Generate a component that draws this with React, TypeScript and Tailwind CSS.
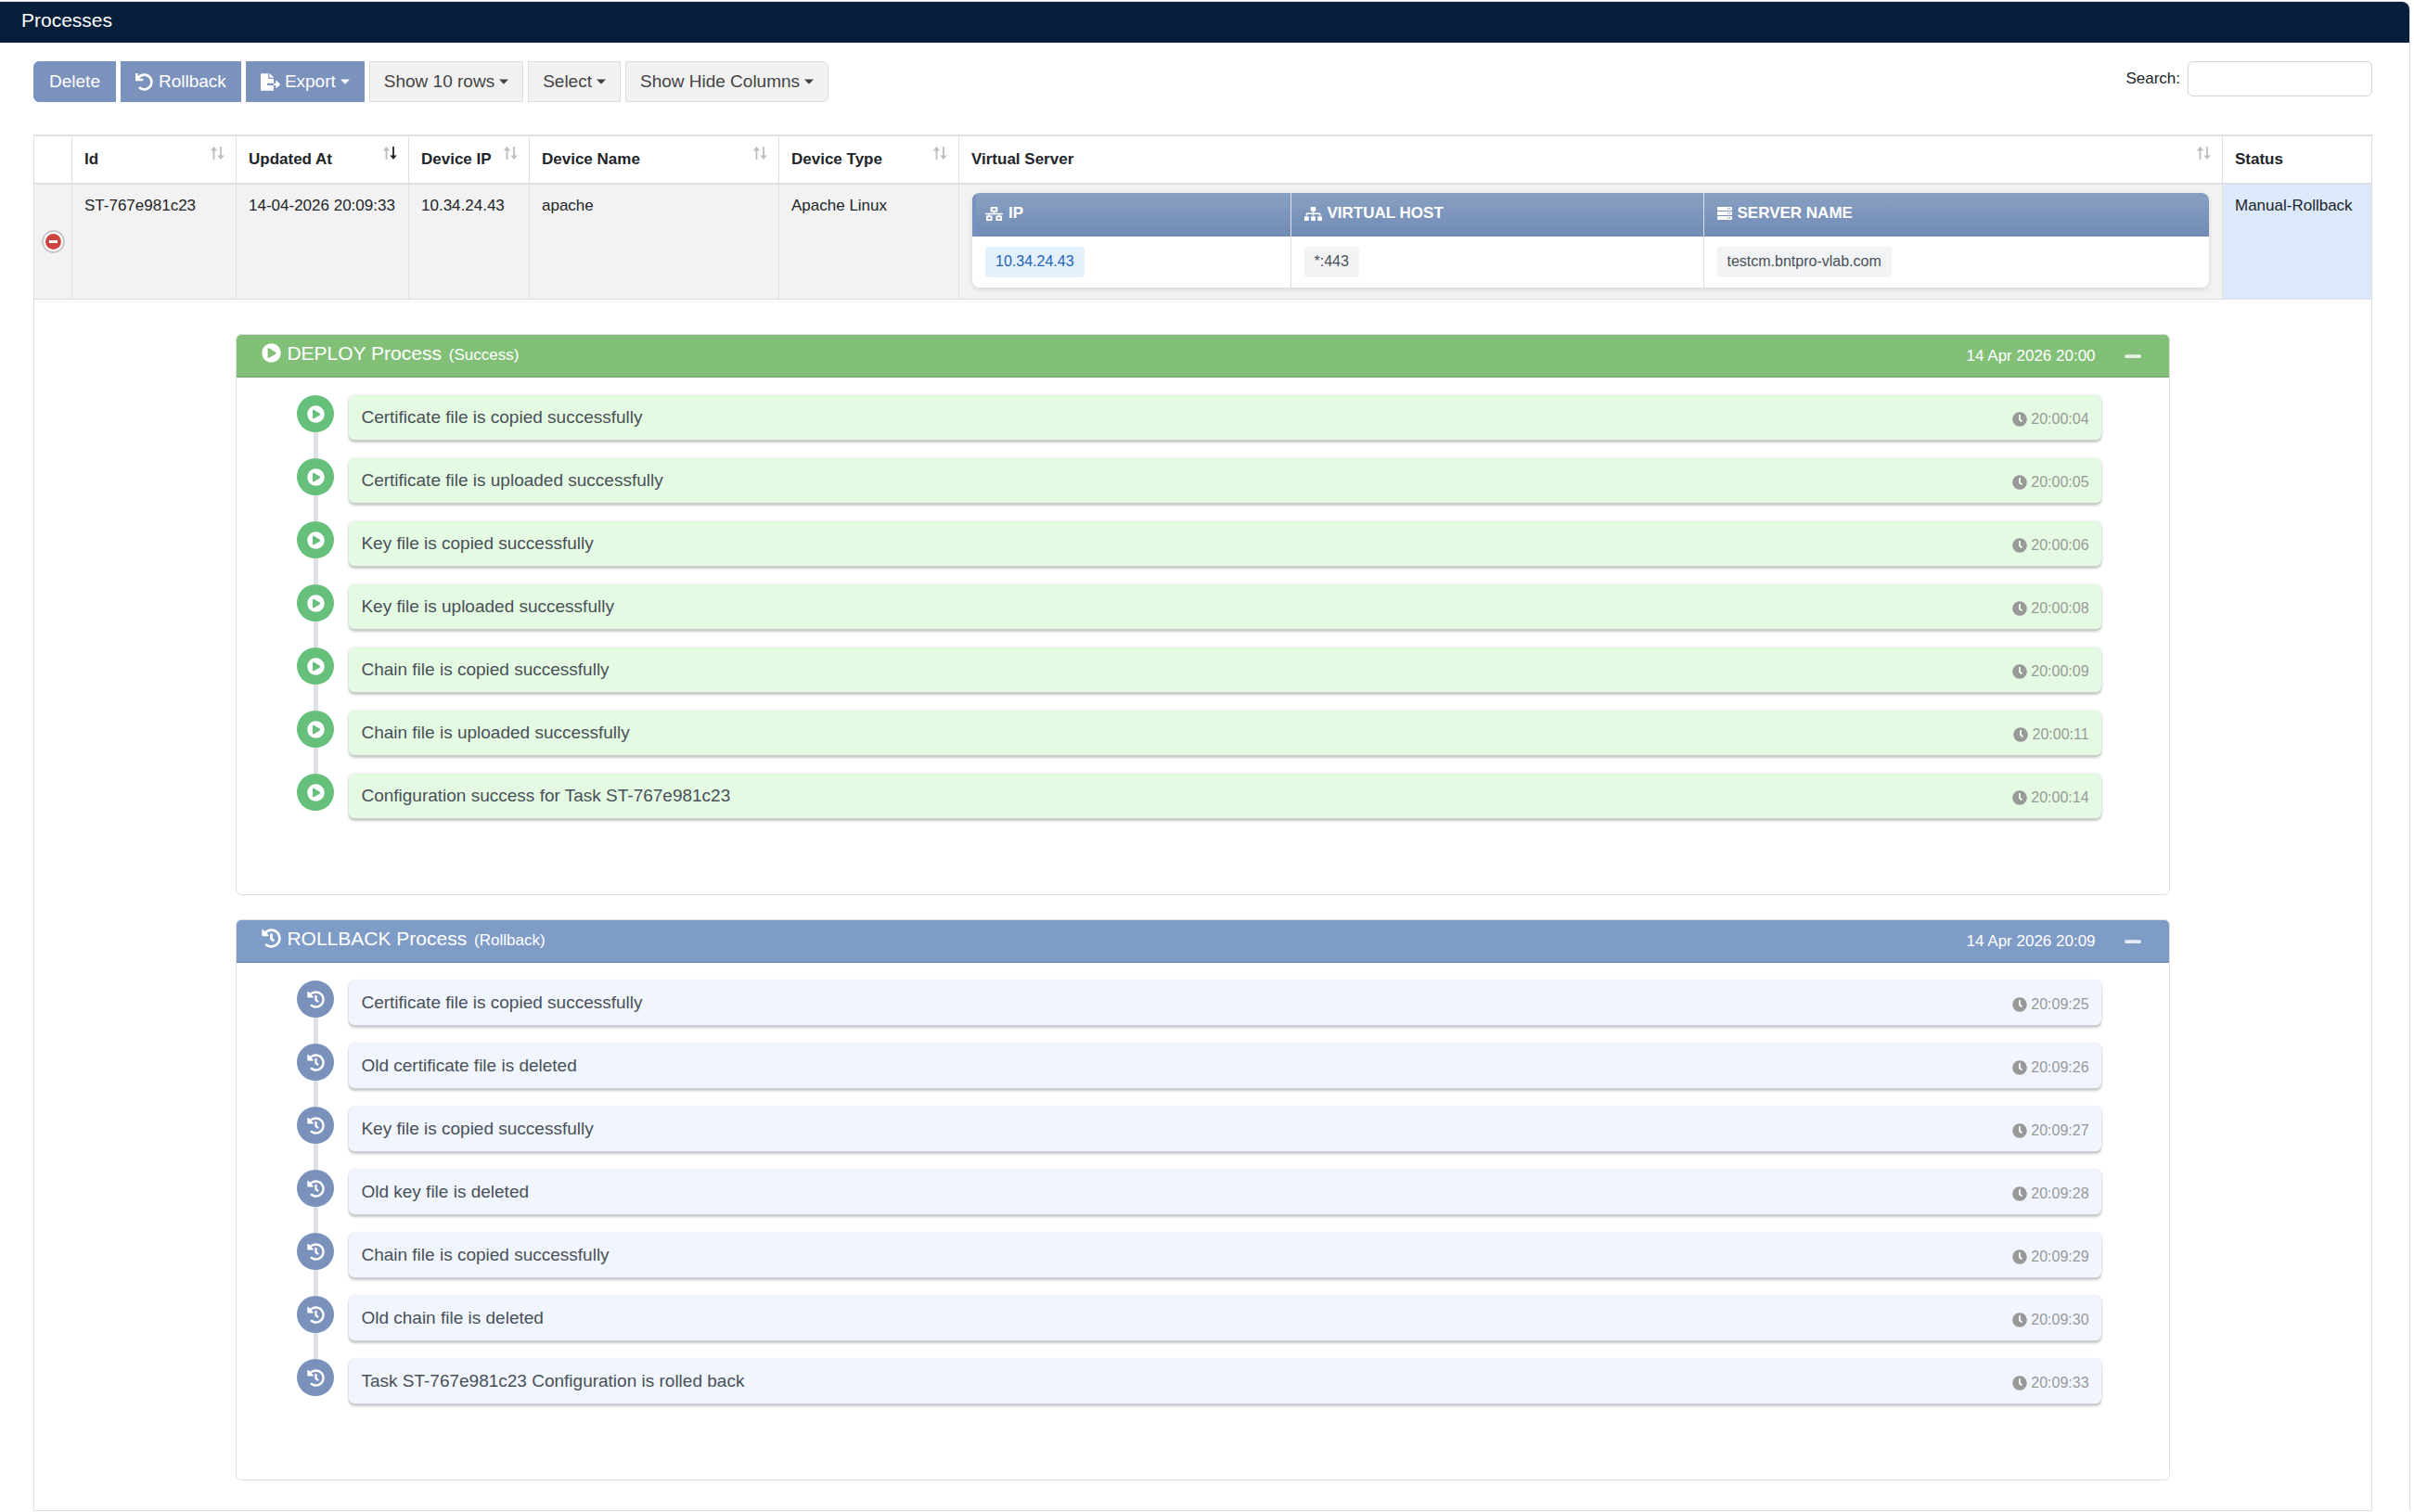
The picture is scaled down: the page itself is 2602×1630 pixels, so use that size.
import { useState } from 'react'
import type { ReactNode } from 'react'
import { FaClock, FaFileExport, FaHistory, FaMinus, FaNetworkWired, FaPlayCircle, FaPlus, FaServer, FaSitemap, FaUndo } from 'react-icons/fa'

type Log = { text: string; time: string }

const deployLogs: Log[] = [
  { text: 'Certificate file is copied successfully', time: '20:00:04' },
  { text: 'Certificate file is uploaded successfully', time: '20:00:05' },
  { text: 'Key file is copied successfully', time: '20:00:06' },
  { text: 'Key file is uploaded successfully', time: '20:00:08' },
  { text: 'Chain file is copied successfully', time: '20:00:09' },
  { text: 'Chain file is uploaded successfully', time: '20:00:11' },
  { text: 'Configuration success for Task ST-767e981c23', time: '20:00:14' },
]

const rollbackLogs: Log[] = [
  { text: 'Certificate file is copied successfully', time: '20:09:25' },
  { text: 'Old certificate file is deleted', time: '20:09:26' },
  { text: 'Key file is copied successfully', time: '20:09:27' },
  { text: 'Old key file is deleted', time: '20:09:28' },
  { text: 'Chain file is copied successfully', time: '20:09:29' },
  { text: 'Old chain file is deleted', time: '20:09:30' },
  { text: 'Task ST-767e981c23 Configuration is rolled back', time: '20:09:33' },
]

const themes = {
  deploy: { header: 'bg-[#82c077]', dot: 'bg-[#66bf7b]', item: 'bg-[#e5fae3]', Icon: FaPlayCircle },
  rollback: { header: 'bg-[#7f9cc7]', dot: 'bg-[#7991bb]', item: 'bg-[#f0f5fe]', Icon: FaHistory },
}

function SortIcon({ desc = false }: { desc?: boolean }) {
  return (
    <svg width="16" height="16" viewBox="0 0 16 16" className="-mt-3.5 shrink-0" aria-hidden="true">
      <path fill="#bdbebf" d="M4.5 1 L8.2 5.6 H5.4 V15 H3.6 V5.6 H.8 Z" />
      <path fill={desc ? '#212529' : '#bdbebf'} d="M12 15 L8.3 10.4 H11.1 V1 H12.9 V10.4 H15.7 Z" />
    </svg>
  )
}

function Caret() {
  return (
    <svg width="10" height="6" viewBox="0 0 10 6" className="ml-[5px]" fill="currentColor" aria-hidden="true">
      <path d="M0 .5 H10 L5 5.8 Z" />
    </svg>
  )
}

function HeadCell({ label, sort }: { label: string; sort?: 'both' | 'desc' }) {
  return (
    <th className="border-x border-y-2 border-[#dfe0e5] py-3 pl-[13px] pr-3 text-left font-bold">
      <div className="flex items-center justify-between whitespace-nowrap">
        {label}
        {sort && <SortIcon desc={sort === 'desc'} />}
      </div>
    </th>
  )
}

function ToolButton({ children, primary = false, className = '' }: { children: ReactNode; primary?: boolean; className?: string }) {
  const look = primary ? 'bg-[#7b92bc] border-[#7b92bc] text-white' : 'bg-[#f1f1f1] border-[#dddddd] text-[#444444]'
  return (
    <button type="button" className={`flex h-11 items-center justify-center border px-[15px] text-[19px] ${look} ${className}`}>
      {children}
    </button>
  )
}

function InnerHead({ icon, label, className }: { icon: ReactNode; label: string; className: string }) {
  return (
    <th className={`border-[#dfe0e5] px-3.5 text-left font-bold text-white ${className}`}>
      <div className="flex h-[47px] items-center gap-1.5 pb-0.5">{icon}{label}</div>
    </th>
  )
}

function Tag({ children, blue = false }: { children: ReactNode; blue?: boolean }) {
  const look = blue ? 'bg-[#e3f1fc] text-[#2563c0]' : 'bg-[#f1f3f5] text-[#495057]'
  return <span className={`inline-block h-[33px] rounded px-[11px] leading-[31px] ${look}`}>{children}</span>
}

function VirtualServers() {
  return (
    <div className="overflow-hidden rounded-lg bg-white shadow-[0_2px_5px_rgba(0,0,0,0.12)]">
      <table className="w-full table-fixed border-collapse">
        <thead>
          <tr className="bg-linear-to-b from-[#88a1c1] to-[#728ab5]">
            <InnerHead className="w-[343px] border-r shadow-[inset_4px_0_0_#7891be]" icon={<FaNetworkWired size={19} />} label="IP" />
            <InnerHead className="w-[445px] border-r" icon={<FaSitemap size={19} />} label="VIRTUAL HOST" />
            <InnerHead className="" icon={<FaServer size={16} />} label="SERVER NAME" />
          </tr>
        </thead>
        <tbody>
          <tr className="h-[55px] text-base">
            <td className="border-r border-[#dfe0e5] px-3.5"><Tag blue>10.34.24.43</Tag></td>
            <td className="border-r border-[#dfe0e5] px-3.5"><Tag>*:443</Tag></td>
            <td className="px-3.5"><Tag>testcm.bntpro-vlab.com</Tag></td>
          </tr>
        </tbody>
      </table>
    </div>
  )
}

function ProcessCard({ kind, title, result, date, logs }: { kind: 'deploy' | 'rollback'; title: string; result: string; date: string; logs: Log[] }) {
  const [open, setOpen] = useState(true)
  const { header, dot, item, Icon } = themes[kind]

  return (
    <section className="mx-auto w-10/12 overflow-hidden rounded-md border border-[#dedfe2] bg-white">
      <header className={`flex h-[46px] items-center border-b border-black/15 pl-[27px] pr-[25px] text-white ${header}`}>
        <Icon size={21} className="-mt-1.5 mr-1.5" />
        <h3 className="-mt-1.5 text-[21px]">
          {title} <small className="ml-0.5 text-[17px]">({result})</small>
        </h3>
        <time className="ml-auto mr-[26px] text-[17px]">{date}</time>
        <button type="button" aria-label={open ? 'Collapse' : 'Expand'} onClick={() => setOpen(!open)} className="px-1 text-white/80">
          {open ? <FaMinus size={20} /> : <FaPlus size={20} />}
        </button>
      </header>

      {open && (
        <ul className="pb-[62px] pl-[65px] pr-[73px] pt-[19px]">
          {logs.map((log, i) => (
            <li key={log.time} className="flex h-[68px] gap-4">
              <div className="flex flex-col items-center">
                <span className={`flex size-10 shrink-0 items-center justify-center rounded-full text-white ${dot}`}>
                  <Icon size={19} />
                </span>
                {i < logs.length - 1 && <span className="w-[5px] grow bg-[#dfe0e5]" />}
              </div>
              <div className={`flex h-[49px] grow items-center justify-between rounded-md border-b border-black/15 px-[13px] shadow-[0_0_2px_rgba(0,0,0,0.15),0_2px_3px_rgba(0,0,0,0.2)] ${item}`}>
                <span className="text-[19px] text-[#495057]">{log.text}</span>
                <time className="flex items-center gap-1 pt-1 text-base text-[#999999]">
                  <FaClock size={16} />
                  {log.time}
                </time>
              </div>
            </li>
          ))}
        </ul>
      )}
    </section>
  )
}

export default function App() {
  const cell = 'border border-[#dfe0e5] px-[13px] pt-2.5 align-top whitespace-nowrap'

  return (
    <main className="bg-white pr-1 pt-px font-['Liberation_Sans',Arial,sans-serif] text-[17px] text-[#212529]">
      <div className="rounded-tr-lg border-r border-t border-[#dfe0e5]">
        <h1 className="flex h-11 items-center rounded-tr-lg bg-[#081f3c] pb-1 pl-[23px] text-[21px] text-white">Processes</h1>

        <div className="pl-9 pr-10 pt-5">
          <div className="flex items-start justify-between">
            <div className="flex gap-[5px]">
              <ToolButton primary className="w-[89px] rounded-l-md">Delete</ToolButton>
              <ToolButton primary><FaUndo size={19} className="mr-1.5" />Rollback</ToolButton>
              <ToolButton primary><FaFileExport size={21} className="mr-[5px]" />Export<Caret /></ToolButton>
              <ToolButton>Show 10 rows<Caret /></ToolButton>
              <ToolButton>Select<Caret /></ToolButton>
              <ToolButton className="rounded-r-md">Show Hide Columns<Caret /></ToolButton>
            </div>
            <label className="flex items-center gap-2">
              Search:
              <input type="search" className="h-[38px] w-[199px] rounded-md border border-[#ced4da] bg-white px-2 outline-none" />
            </label>
          </div>

          <table className="mt-[35px] w-full table-fixed border-collapse">
            <colgroup>
              <col className="w-[41px]" />
              <col className="w-[177px]" />
              <col className="w-[186px]" />
              <col className="w-[130px]" />
              <col className="w-[269px]" />
              <col className="w-[194px]" />
              <col />
              <col className="w-[161px]" />
            </colgroup>
            <thead>
              <tr>
                <th className="border-x border-y-2 border-[#dfe0e5]" />
                <HeadCell label="Id" sort="both" />
                <HeadCell label="Updated At" sort="desc" />
                <HeadCell label="Device IP" sort="both" />
                <HeadCell label="Device Name" sort="both" />
                <HeadCell label="Device Type" sort="both" />
                <HeadCell label="Virtual Server" sort="both" />
                <HeadCell label="Status" />
              </tr>
            </thead>
            <tbody>
              <tr className="h-[125px] bg-[#f2f2f2]">
                <td className="border border-[#dfe0e5]">
                  <button type="button" aria-label="Hide details" className="mx-auto flex size-[25px] items-center justify-center rounded-full border-2 border-[#c9c9c9] bg-white">
                    <span className="flex size-[17px] items-center justify-center rounded-full bg-[#cc4540]">
                      <span className="h-[3px] w-[9px] bg-white" />
                    </span>
                  </button>
                </td>
                <td className={cell}>ST-767e981c23</td>
                <td className={cell}>14-04-2026 20:09:33</td>
                <td className={cell}>10.34.24.43</td>
                <td className={cell}>apache</td>
                <td className={cell}>Apache Linux</td>
                <td className="border border-[#dfe0e5] px-3.5 pt-[9px] align-top"><VirtualServers /></td>
                <td className={`${cell} bg-[#dce9fa]`}>Manual-Rollback</td>
              </tr>
              <tr>
                <td colSpan={8} className="border border-[#dfe0e5] px-[9px] pb-8 pt-[37px]">
                  <div className="flex flex-col gap-[26px]">
                    <ProcessCard kind="deploy" title="DEPLOY Process" result="Success" date="14 Apr 2026 20:00" logs={deployLogs} />
                    <ProcessCard kind="rollback" title="ROLLBACK Process" result="Rollback" date="14 Apr 2026 20:09" logs={rollbackLogs} />
                  </div>
                </td>
              </tr>
            </tbody>
          </table>
        </div>
      </div>
    </main>
  )
}
